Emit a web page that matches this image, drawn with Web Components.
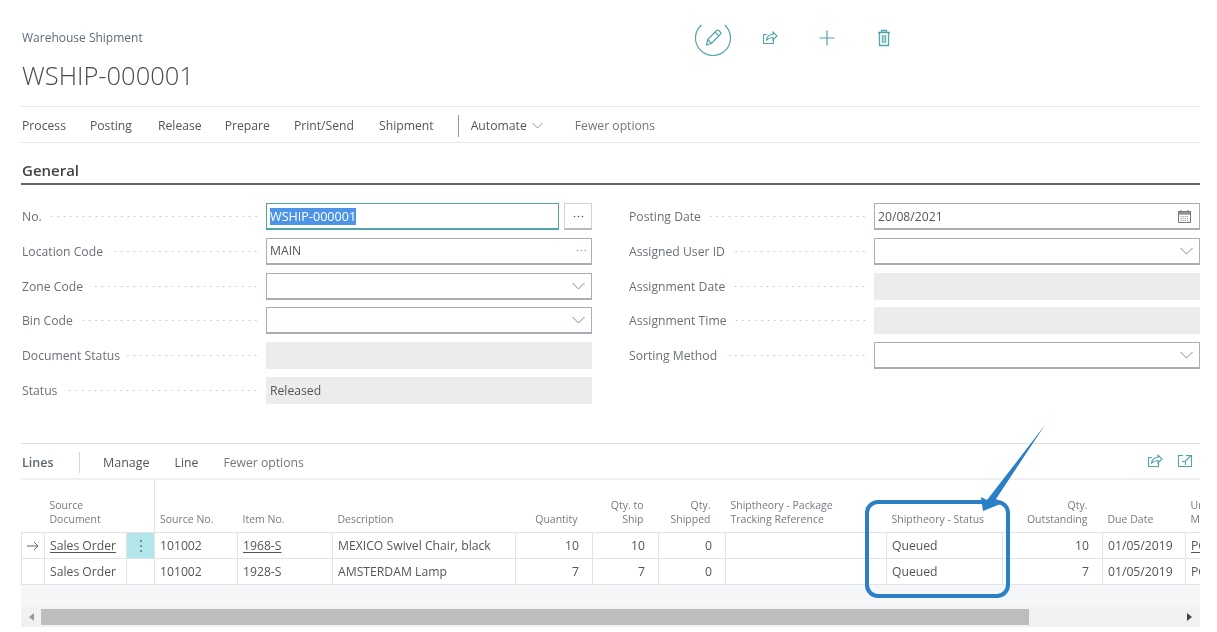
<!DOCTYPE html>
<html>
<head>
<meta charset="utf-8">
<title>Warehouse Shipment</title>
<style>
html, body { margin: 0; padding: 0; background: #fff; }
body { font-family: "Open Sans", "Liberation Sans", sans-serif; color: #505050; overflow: hidden; }
</style>
</head>
<body>
<bc-page>
  <page-header caption="Warehouse Shipment" title="WSHIP-000001"></page-header>
  <action-bar></action-bar>
  <fast-tab heading="General">
    <form-field slot="left" label="No." kind="focus" value="WSHIP-000001"></form-field>
    <form-field slot="left" label="Location Code" kind="dots" value="MAIN"></form-field>
    <form-field slot="left" label="Zone Code" kind="select"></form-field>
    <form-field slot="left" label="Bin Code" kind="select"></form-field>
    <form-field slot="left" label="Document Status" kind="readonly"></form-field>
    <form-field slot="left" label="Status" kind="readonly" value="Released"></form-field>
    <form-field slot="right" label="Posting Date" kind="date" value="20/08/2021"></form-field>
    <form-field slot="right" label="Assigned User ID" kind="select"></form-field>
    <form-field slot="right" label="Assignment Date" kind="readonly"></form-field>
    <form-field slot="right" label="Assignment Time" kind="readonly"></form-field>
    <form-field slot="right" label="Sorting Method" kind="select"></form-field>
  </fast-tab>
  <lines-part></lines-part>
</bc-page>
<call-out></call-out>

<script>
const TEAL = "#4fa5a8";

const SHARE_ICON = `<path d="M6 5.5H2.5v9h10V10.5M5.5 11c.5-3.5 3-5.5 6.5-5.5V3l4 4-4 4V8.5c-2.5 0-4.5.5-6.5 2.5z" fill="none" stroke="currentColor" stroke-width="1.1"/>`;

class BcPage extends HTMLElement {
  constructor() {
    super();
    this.attachShadow({mode: "open"});
    this.shadowRoot.innerHTML = `
    <style>
    :host { display: block; width: 1179px; padding: 0 17px 0 21px; filter: blur(.35px); }
    </style>
    <slot></slot>`;
  }
}

class PageHeader extends HTMLElement {
  constructor() {
    super();
    this.attachShadow({mode: "open"});
    this.shadowRoot.innerHTML = `
    <style>
    :host { display: block; height: 107px; box-sizing: border-box; border-bottom: 1px solid #e6e6ec; }
    .top { display: flex; height: 75px; padding-top: 19px; box-sizing: border-box; }
    .text { width: 673px; }
    .caption { font-size: 12px; line-height: 37px; height: 37px; color: #5f6b7a; padding-left: 1px; }
    .title { font-size: 25.5px; font-weight: 300; line-height: 39px; color: #4a4a4a; padding-left: 1px; }
    .icons { display: flex; align-items: center; height: 38px; color: ${TEAL}; }
    .edit { width: 38px; height: 38px; display: block; }
    .btn { display: flex; justify-content: center; align-items: center; width: 20px; height: 20px; }
    .icons svg { display: block; }
    </style>
    <div class="top">
      <div class="text">
        <div class="caption"></div>
        <div class="title"></div>
      </div>
      <div class="icons">
        <svg class="edit" viewBox="0 0 38 38" fill="none" stroke="currentColor">
          <path d="M7.3 6A17.5 17.5 0 1 0 30.7 6" stroke-width="1.2"/>
          <path d="M12.5 26l1.2-5.5L22.5 11.5a1.6 1.6 0 0 1 2.3 0l1.5 1.5a1.6 1.6 0 0 1 0 2.3L17.5 24.5zM13.7 20.5l3.8 4M21 13l3.8 3.8" stroke-width="1.2"/>
        </svg>
        <div class="btn" style="margin-left:28px"><svg width="18" height="18" viewBox="0 0 18 18">${SHARE_ICON}</svg></div>
        <div class="btn" style="margin-left:37px"><svg width="18" height="18" viewBox="0 0 18 18"><path d="M9 1.5v15M1.5 9h15" stroke="currentColor" stroke-width="1.2" fill="none"/></svg></div>
        <div class="btn" style="margin-left:37px"><svg width="16" height="18" viewBox="0 0 16 18" fill="none" stroke="currentColor" stroke-width="1.3"><path d="M2 3.5h12M5.5 3.5V1.5h5v2M3.5 3.5v13h9v-13"/><path d="M6.3 6v8M8 6v8M9.7 6v8" stroke-width="1"/></svg></div>
      </div>
    </div>`;
    this.shadowRoot.querySelector(".caption").textContent = this.getAttribute("caption");
    this.shadowRoot.querySelector(".title").textContent = this.getAttribute("title");
  }
}

class ActionBar extends HTMLElement {
  constructor() {
    super();
    this.attachShadow({mode: "open"});
    this.shadowRoot.innerHTML = `
    <style>
    :host { display: flex; align-items: center; height: 36px; box-sizing: border-box; padding-top: 2px; border-bottom: 1px solid #e6e6ec; font-size: 12.2px; color: #555; }
    span { white-space: nowrap; }
    .sep { width: 1px; height: 22px; background: #9a9a9a; margin: 0 12px 0 0; }
    .more { color: #777; }
    svg { margin-left: 5px; display: block; }
    </style>
    <span style="margin-left:1px">Process</span>
    <span style="margin-left:24px">Posting</span>
    <span style="margin-left:26px">Release</span>
    <span style="margin-left:23px">Prepare</span>
    <span style="margin-left:24px">Print/Send</span>
    <span style="margin-left:25px">Shipment</span>
    <div class="sep" style="margin-left:24px"></div>
    <span>Automate</span>
    <svg width="11" height="7" viewBox="0 0 11 7"><path d="M.5 1l5 5 5-5" fill="none" stroke="#999" stroke-width="1"/></svg>
    <span class="more" style="margin-left:32px">Fewer options</span>`;
  }
}

class FastTab extends HTMLElement {
  constructor() {
    super();
    this.attachShadow({mode: "open"});
    this.shadowRoot.innerHTML = `
    <style>
    :host { display: block; }
    .head { height: 42px; box-sizing: border-box; border-bottom: 2px solid #5d6475; font-size: 15px; font-weight: 600; color: #444; line-height: 28px; padding: 13px 0 0 1px; }
    .cols { display: grid; grid-template-columns: 571px 571px; column-gap: 37px; padding-top: 18px; height: 258px; box-sizing: border-box; }
    .col { display: flex; flex-direction: column; }
    .left { --label-inset: 1px; }
    </style>
    <div class="head"></div>
    <div class="cols">
      <div class="col left"><slot name="left"></slot></div>
      <div class="col"><slot name="right"></slot></div>
    </div>`;
    this.shadowRoot.querySelector(".head").textContent = this.getAttribute("heading");
  }
}

const fieldTemplate = document.createElement("template");
fieldTemplate.innerHTML = `
<style>
:host { display: grid; grid-template-columns: 245px 1fr; height: 34.8px; align-items: start; font-size: 12.2px; }
.label { display: flex; align-items: center; height: 27px; padding: 0 7px 0 var(--label-inset, 0); color: #6b7078; box-sizing: border-box; }
.label span { white-space: nowrap; }
.leader { flex: 1; margin-left: 7px; height: 3px; background: radial-gradient(circle at center, #b9bcc2 .7px, transparent 1px) repeat-x right center / 6.4px 3px; }
.row { display: flex; gap: 5px; height: 27px; }
.box { flex: 1; display: flex; align-items: center; justify-content: space-between; height: 27px; box-sizing: border-box; border: 1px solid #a9adb6; border-bottom-width: 2px; padding: 0 4px 0 3px; color: #555; background: #fff; min-width: 0; }
.box.readonly { background: #ebecee; border: 0; padding: 0 4px; }
.box.focus { border: 1px solid #4fa5a8; border-bottom-width: 2px; }
.sel { background: #4d94e6; color: #fff; font-size: 12.6px; }
.assist { width: 28px; height: 27px; box-sizing: border-box; border: 1px solid #d0d2d6; border-bottom: 2px solid #b5b8be; display: flex; align-items: center; justify-content: center; }
svg { display: block; }
</style>
<div class="label"><span></span><div class="leader"></div></div>
<div class="row"><div class="box"><span class="val"></span><span class="icon"></span></div></div>`;

class FormField extends HTMLElement {
  constructor() {
    super();
    this.attachShadow({mode: "open"});
    this.shadowRoot.appendChild(fieldTemplate.content.cloneNode(true));
  }

  connectedCallback() {
    this.render();
  }

  render() {
    const root = this.shadowRoot;
    const kind = this.getAttribute("kind");
    const box = root.querySelector(".box");
    const val = root.querySelector(".val");
    const icon = root.querySelector(".icon");
    const threeDots = (c) => `<svg width="11" height="3" viewBox="0 0 11 3" fill="${c}"><circle cx="1.5" cy="1.5" r=".8"/><circle cx="5.5" cy="1.5" r=".8"/><circle cx="9.5" cy="1.5" r=".8"/></svg>`;
    root.querySelector(".label span").textContent = this.getAttribute("label");
    val.textContent = this.getAttribute("value") || "";
    box.classList.add(kind);
    if (kind == "select") {
      icon.innerHTML = `<svg style="margin-right:2px" width="13" height="8" viewBox="0 0 13 8"><path d="M.5 1l6 6 6-6" fill="none" stroke="#888" stroke-width="1"/></svg>`;
    } else if (kind == "dots") {
      icon.innerHTML = threeDots("#999");
    } else if (kind == "date") {
      icon.innerHTML = `<svg style="margin-right:3px" width="15" height="15" viewBox="0 0 15 15" fill="none" stroke="#777"><path d="M1.5 2.5h12v11h-12z"/><path d="M1.5 2.5h12v2.5h-12z" fill="#999"/><path d="M4 1v2M11 1v2"/><path d="M3.5 7.5h8M3.5 9.5h8M3.5 11.5h8" stroke-dasharray="1.2 .9" stroke="#999"/></svg>`;
    } else if (kind == "focus") {
      val.classList.add("sel");
      const assist = document.createElement("div");
      assist.className = "assist";
      assist.innerHTML = threeDots("#555");
      root.querySelector(".row").appendChild(assist);
    }
  }
}

class LinesPart extends HTMLElement {
  constructor() {
    super();
    this.attachShadow({mode: "open"});
    this.shadowRoot.innerHTML = `
    <style>
    :host { display: block; border-top: 1px solid #dfe0e5; }
    .bar { display: flex; align-items: center; height: 36px; box-sizing: border-box; padding-top: 2px; font-size: 12.2px; color: #555; border-bottom: 2px solid #eeeff2; }
    .bar span { white-space: nowrap; }
    .sep { width: 1px; height: 21px; background: #d6d6d6; margin: 0 23px 0 24px; }
    .end { margin-left: auto; display: flex; gap: 12px; color: ${TEAL}; margin-right: 6px; position: relative; top: -1px; }
    </style>
    <div class="bar">
      <span style="font-weight:600;color:#5c6570;margin-left:1px;font-size:12.5px;width:33px">Lines</span>
      <div class="sep"></div>
      <span style="font-size:12.5px">Manage</span>
      <span style="margin-left:25px">Line</span>
      <span style="margin-left:25px;color:#777">Fewer options</span>
      <div class="end">
        <svg width="18" height="18" viewBox="0 0 18 18">${SHARE_ICON}</svg>
        <svg width="18" height="18" viewBox="0 0 18 18" fill="none" stroke="currentColor" stroke-width="1.1"><path d="M7 3.5H2.5v11h13v-7M10 3.5h5.5v0M15.5 3v5M15 3.5L9.5 9M6 9.5h3.5V13"/></svg>
      </div>
    </div>
    <lines-table></lines-table>
    <scroll-track></scroll-track>`;
  }
}

const COLS = [23, 82, 28, 83, 95, 183, 77, 66, 67, 161, 116, 100, 83, 15];
const HEADS = [
  ["", ""],
  ["Source<br>Document", "l"],
  ["", ""],
  ["Source No.", "l"],
  ["Item No.", "l"],
  ["Description", "l"],
  ["Quantity", "r"],
  ["Qty. to<br>Ship", "r"],
  ["Qty.<br>Shipped", "r"],
  ["Shiptheory - Package<br>Tracking Reference", "l"],
  ["Shiptheory - Status", "l"],
  ["Qty.<br>Outstanding", "r"],
  ["Due Date", "l"],
  ["Unit of<br>Measure Code", "l"]
];
const ROWS = [
  ["arrow", "<u>Sales Order</u>", "menu", "101002", "<u>1968-S</u>", "MEXICO Swivel Chair, black", "10", "10", "0", "", "Queued", "10", "01/05/2019", "<u>PCS</u>"],
  ["", "Sales Order", "", "101002", "1928-S", "AMSTERDAM Lamp", "7", "7", "0", "", "Queued", "7", "01/05/2019", "PCS"]
];
const RIGHT_COLS = [6, 7, 8, 11];

class LinesTable extends HTMLElement {
  constructor() {
    super();
    this.attachShadow({mode: "open"});
    this.shadowRoot.innerHTML = `
    <style>
    :host { display: block; background: #f5f6f8; height: 127px; overflow: hidden; }
    table { border-collapse: collapse; table-layout: fixed; width: 1179px; background: #fff; }
    th { height: 46px; vertical-align: bottom; font-weight: 400; font-size: 10.5px; line-height: 14px; color: #757a82; text-align: left; padding: 0 4px 6px 5px; white-space: nowrap; overflow: hidden; }
    th.r { text-align: right; padding-right: 15px; }
    th.frozen { border-right: 1px solid #e2e3e7; }
    td { height: 25px; padding: 0 5px; font-size: 12.2px; color: #555; border: 1px solid #e2e3e7; white-space: nowrap; overflow: hidden; }
    td.r { text-align: right; padding-right: 13px; }
    td.menu { background: #b2e6ea; padding: 0; }
    td svg { display: block; margin: 0 auto; }
    td:last-child { border-right: 0; }
    u { text-underline-offset: 2px; }
    </style>
    <table><colgroup></colgroup><thead><tr></tr></thead><tbody></tbody></table>`;
  }

  connectedCallback() {
    this.render();
  }

  render() {
    const root = this.shadowRoot;
    root.querySelector("colgroup").innerHTML = COLS.map(w => `<col style="width:${w}px">`).join("");
    root.querySelector("thead tr").innerHTML = HEADS.map((h, i) =>
      `<th class="${h[1]} ${i == 2 ? "frozen" : ""}">${h[0]}</th>`).join("");
    root.querySelector("tbody").innerHTML = ROWS.map(row => "<tr>" + row.map((c, i) => {
      if (c == "arrow") return `<td><svg width="12" height="10" viewBox="0 0 12 10"><path d="M0 5h11M7 1l4 4-4 4" fill="none" stroke="#666"/></svg></td>`;
      if (c == "menu") return `<td class="menu"><svg width="4" height="14" viewBox="0 0 4 14" fill="#4a7c80"><circle cx="2" cy="2" r="1"/><circle cx="2" cy="7" r="1"/><circle cx="2" cy="12" r="1"/></svg></td>`;
      return `<td class="${RIGHT_COLS.includes(i) ? "r" : ""}">${c}</td>`;
    }).join("") + "</tr>").join("");
  }
}

class ScrollTrack extends HTMLElement {
  constructor() {
    super();
    this.attachShadow({mode: "open"});
    this.shadowRoot.innerHTML = `
    <style>
    :host { display: flex; align-items: center; height: 20px; background: #f1f1f1; }
    .end { width: 20px; display: flex; justify-content: center; }
    .thumb { width: 988px; height: 16px; background: #bdbdbd; }
    .space { flex: 1; }
    </style>
    <div class="end"><svg width="5" height="8" viewBox="0 0 5 8"><path d="M5 0v8L0 4z" fill="#999"/></svg></div>
    <div class="thumb"></div>
    <div class="space"></div>
    <div class="end" style="width:22px"><svg width="5" height="8" viewBox="0 0 5 8"><path d="M0 0v8l5-4z" fill="#444"/></svg></div>`;
  }
}

// the blue annotation drawn over the screenshot
class CallOut extends HTMLElement {
  constructor() {
    super();
    this.attachShadow({mode: "open"});
    this.shadowRoot.innerHTML = `
    <style>
    :host { display: block; position: absolute; left: 860px; top: 420px; width: 190px; height: 185px; pointer-events: none; }
    svg { display: block; }
    </style>
    <svg width="190" height="185" viewBox="860 420 190 185">
      <rect x="867" y="502" width="141" height="94" rx="11" fill="none" stroke="#2b7fc6" stroke-width="4"/>
      <path d="M1045 425L996 499l7 4-20 8-2-14 6 3z" fill="#2b7fc6"/>
    </svg>`;
  }
}

customElements.define("bc-page", BcPage);
customElements.define("page-header", PageHeader);
customElements.define("action-bar", ActionBar);
customElements.define("fast-tab", FastTab);
customElements.define("form-field", FormField);
customElements.define("lines-part", LinesPart);
customElements.define("lines-table", LinesTable);
customElements.define("scroll-track", ScrollTrack);
customElements.define("call-out", CallOut);
</script>
</body>
</html>
